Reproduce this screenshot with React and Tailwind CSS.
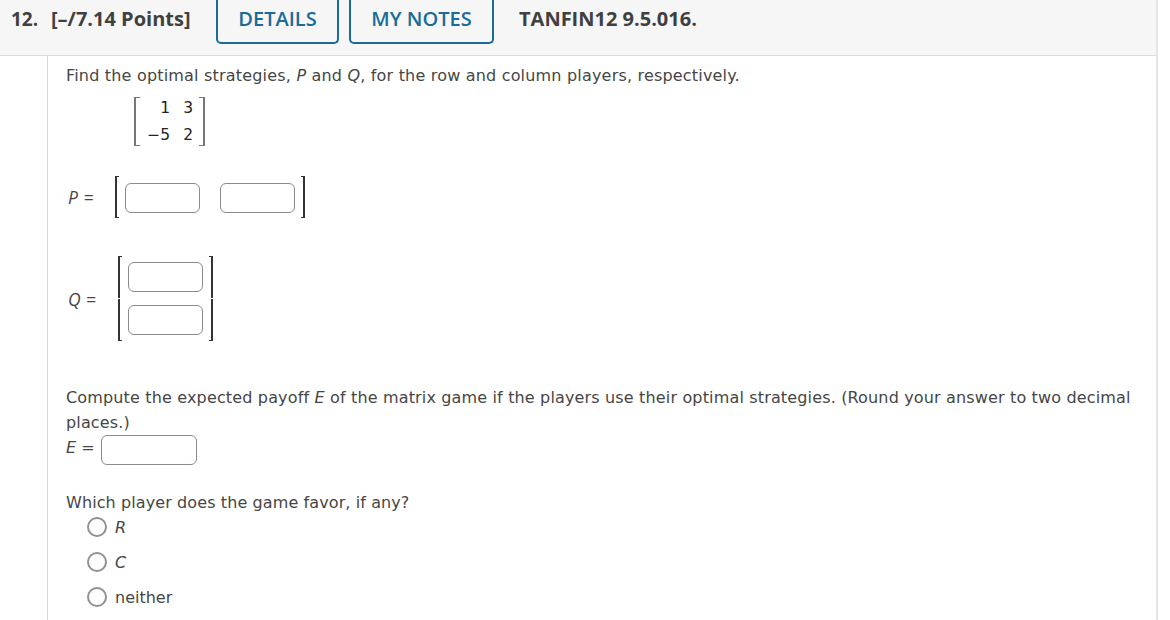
import React from 'react';

const Bracket = ({ side, className }) => (
  <span
    className={`shrink-0 border-y ${side === 'left' ? 'border-l-2' : 'border-r-2'} ${className}`}
  />
);

// Tall brackets are stacked from an upper and a lower piece
const TallBracket = ({ side, className = '' }) => (
  <span className={`flex h-[85px] w-1 shrink-0 flex-col gap-px ${className}`}>
    <span className={`flex-1 border-t border-[#333] ${side === 'left' ? 'border-l-2' : 'border-r-2'}`} />
    <span className={`flex-1 border-b border-[#333] ${side === 'left' ? 'border-l-2' : 'border-r-2'}`} />
  </span>
);

const AnswerBox = ({ label, className }) => (
  <input
    type="text"
    aria-label={label}
    className={`block h-[30px] shrink-0 rounded-md border border-[#8b8b8b] bg-white px-2 outline-none ${className}`}
  />
);

const options = [
  { value: 'R', italic: true },
  { value: 'C', italic: true },
  { value: 'neither', italic: false },
];

const App = () => {
  return (
    <div className="h-[620px] overflow-hidden bg-white font-['DejaVu_Sans',sans-serif] text-base leading-[25px] text-[#464646]">
      <div className="flex h-full w-[1158px] flex-col border-r-2 border-[#e5e5e5]">
        {/* Question header */}
        <header className="flex h-14 shrink-0 items-start border-b border-[#dcdcdc] bg-[#f6f6f6] pl-[11px] font-['Open_Sans',sans-serif] text-[20px] font-bold leading-[38px] text-[#404040]">
          <span className="w-10 whitespace-nowrap text-[19px]">12.</span>
          <span className="w-[165px] whitespace-nowrap">[–/7.14 Points]</span>
          <button className="h-[43.5px] w-[123px] rounded-b-[5px] border-2 border-t-0 border-[#196b99] font-semibold text-[#196b99]">
            <span className="block h-[42px]">DETAILS</span>
          </button>
          <button className="ml-[10px] h-[43.5px] w-[145px] rounded-b-[5px] border-2 border-t-0 border-[#196b99] font-semibold text-[#196b99]">
            <span className="block h-[42px]">MY NOTES</span>
          </button>
          <span className="ml-[25px] whitespace-nowrap">TANFIN12 9.5.016.</span>
        </header>

        {/* Question body */}
        <main className="ml-[47px] flex-1 border-l border-[#d6d6d6] pl-[18px] pt-[7px]">
          <p className="whitespace-nowrap tracking-[0.19px]">
            Find the optimal strategies, <i>P</i> and <i>Q</i>, for the row and column players, respectively.
          </p>

          {/* Payoff matrix */}
          <div className="ml-[68px] mt-[9px] flex h-[49px] w-[71px] text-[15.5px] text-[#222]">
            <Bracket side="left" className="h-[49px] w-1.5 border-[#777]" />
            <div className="-mt-[2px] grid w-[59px] grid-cols-[30px_23px] text-right leading-[27px]">
              <span>1</span>
              <span>3</span>
              <span>−5</span>
              <span>2</span>
            </div>
            <Bracket side="right" className="h-[49px] w-1.5 border-[#777]" />
          </div>

          {/* Row strategy */}
          <div className="ml-[2px] mt-[30px] flex h-[42px] items-center">
            <span className="w-[47px] pt-px font-['Open_Sans',sans-serif] text-[17.5px] tracking-[0.6px]">
              <i>P</i> =
            </span>
            <Bracket side="left" className="h-[42px] w-1 border-[#333]" />
            <AnswerBox label="P first entry" className="mt-px ml-[6px] w-[75px]" />
            <AnswerBox label="P second entry" className="mt-px ml-5 w-[75px]" />
            <Bracket side="right" className="ml-[6px] h-[42px] w-1 border-[#333]" />
          </div>

          {/* Column strategy */}
          <div className="ml-[2px] mt-[38px] flex h-[85px] items-center">
            <span className="w-[50px] pt-px font-['Open_Sans',sans-serif] text-[17.5px] tracking-[0.6px]">
              <i>Q</i> =
            </span>
            <TallBracket side="left" />
            <div className="ml-[6px] flex flex-col gap-[13px]">
              <AnswerBox label="Q first entry" className="w-[75px]" />
              <AnswerBox label="Q second entry" className="w-[75px]" />
            </div>
            <TallBracket side="right" className="ml-[6px]" />
          </div>

          {/* Expected payoff */}
          <p className="mt-[44px] whitespace-nowrap tracking-[0.155px]">
            Compute the expected payoff <i>E</i> of the matrix game if the players use their optimal strategies. (Round your answer to two decimal
            <br />
            places.)
          </p>
          <div className="flex h-[30px]">
            <span className="w-[35px]">
              <i>E</i> =
            </span>
            <AnswerBox label="Expected payoff" className="w-24" />
          </div>

          {/* Favored player */}
          <p className="mt-[25px] tracking-[0.1px]">Which player does the game favor, if any?</p>
          <div className="ml-[21px] flex flex-col gap-[10px]">
            {options.map((option) => (
              <label key={option.value} className="flex h-[25px] items-center gap-2">
                <input
                  type="radio"
                  name="favor"
                  className="mb-px h-5 w-5 appearance-none rounded-full border-2 border-[#919191] bg-white"
                />
                <span className={option.italic ? 'italic' : ''}>{option.value}</span>
              </label>
            ))}
          </div>
        </main>
      </div>
    </div>
  );
};

export default App;
